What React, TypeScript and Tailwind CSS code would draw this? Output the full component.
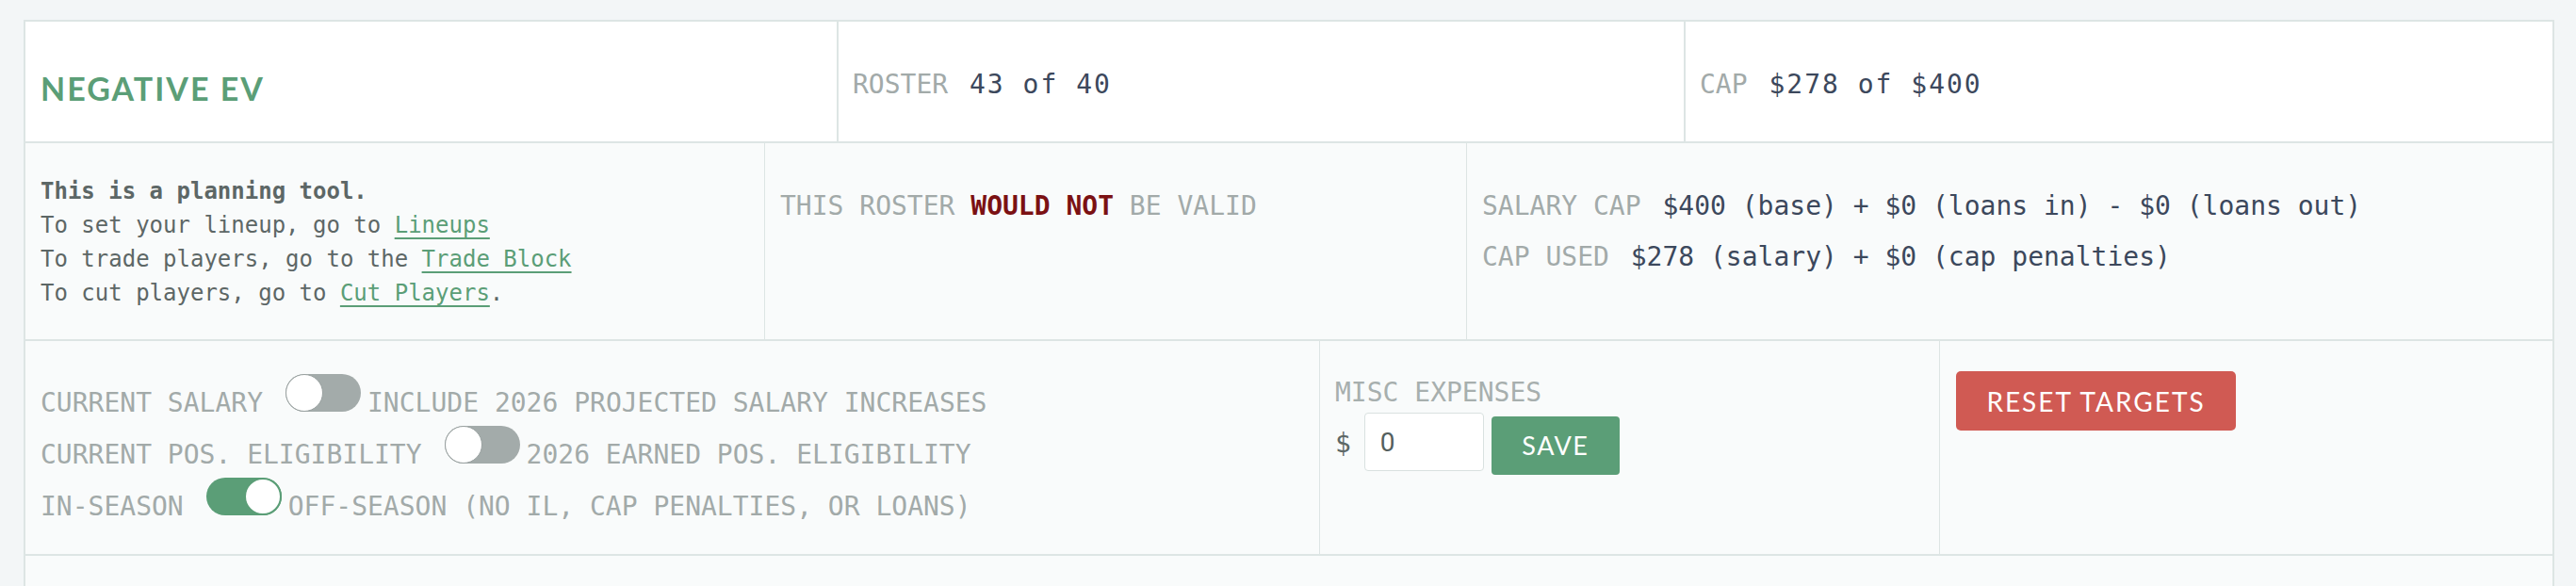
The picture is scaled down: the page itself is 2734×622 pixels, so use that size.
import React from "react";

function Toggle({ on }: { on: boolean }) {
  return (
    <div
      className={`relative ml-[24px] mr-[7px] h-[40px] w-[80px] shrink-0 rounded-full ${
        on ? "bg-[#5b9e77]" : "bg-[#a3abaa]"
      }`}
    >
      <div
        className={`absolute top-0 h-[40px] w-[40px] rounded-full bg-white ${
          on ? "right-0 border-2 border-[#5b9e77]" : "left-0 border-[1.5px] border-[#98a09f]"
        }`}
      />
    </div>
  );
}

function ToggleRow({ left, right, on }: { left: string; right: string; on: boolean }) {
  return (
    <div className="flex items-baseline">
      <span className="leading-none whitespace-pre">{left}</span>
      <Toggle on={on} />
      <span className="leading-none whitespace-pre">{right}</span>
    </div>
  );
}

export default function App() {
  return (
    <div className="h-screen overflow-hidden bg-[#f3f6f7] pt-[21px] pl-[25px] pr-[23px] font-['DejaVu_Sans_Mono',monospace]">
      <div className="border-2 border-b-0 border-[#dde5e4]">
        {/* Row 1 */}
        <div className="grid h-[129px] grid-cols-[861px_899px_1fr] border-b-2 border-[#dde5e4] bg-white">
          <div className="pl-4 pt-[54px]">
            <h1 className="font-['Lato',sans-serif] text-[34px] font-bold leading-none tracking-[2px] text-[#5b9e77]">
              NEGATIVE EV
            </h1>
          </div>
          <div className="border-l-2 border-[#dde5e4] pl-[15px] pt-[53px] text-[28px] leading-none">
            <span className="text-[#a2aaa9]">ROSTER</span>{" "}
            <span className="ml-[6px] tracking-[2px] text-[#3c485c]">43 of 40</span>
          </div>
          <div className="border-l-2 border-[#dde5e4] pl-[15px] pt-[53px] text-[28px] leading-none">
            <span className="text-[#a2aaa9]">CAP</span>{" "}
            <span className="ml-[6px] tracking-[2px] text-[#3c485c]">$278 of $400</span>
          </div>
        </div>

        {/* Row 2 */}
        <div className="grid h-[210px] grid-cols-[784px_745px_1fr] border-b-2 border-[#dde5e4] bg-[#f9fbfb]">
          <div className="pl-4 pt-[33px] text-[24px] leading-[36px] text-[#5d6766]">
            <div className="font-bold">This is a planning tool.</div>
            <div>
              To set your lineup, go to{" "}
              <a className="text-[#5b9e77] underline decoration-2 underline-offset-[5px]">Lineups</a>
            </div>
            <div>
              To trade players, go to the{" "}
              <a className="text-[#5b9e77] underline decoration-2 underline-offset-[5px]">Trade Block</a>
            </div>
            <div>
              To cut players, go to{" "}
              <a className="text-[#5b9e77] underline decoration-2 underline-offset-[5px]">Cut Players</a>.
            </div>
          </div>
          <div className="border-l border-[#dde5e4] pl-4 pt-[40px] text-[28px] leading-[54px] text-[#a2aaa9]">
            THIS ROSTER <span className="font-bold text-[#7b1113]">WOULD NOT</span> BE VALID
          </div>
          <div className="border-l border-[#dde5e4] pl-4 pt-[40px] text-[28px] leading-[54px]">
            <div>
              <span className="text-[#a2aaa9]">SALARY CAP</span>{" "}
              <span className="ml-[6px] text-[#3c485c]">$400 (base) + $0 (loans in) - $0 (loans out)</span>
            </div>
            <div>
              <span className="text-[#a2aaa9]">CAP USED</span>{" "}
              <span className="ml-[6px] text-[#3c485c]">$278 (salary) + $0 (cap penalties)</span>
            </div>
          </div>
        </div>

        {/* Row 3 */}
        <div className="grid h-[228px] grid-cols-[1373px_658px_1fr] border-b-2 border-[#dde5e4] bg-[#f9fbfb]">
          <div className="flex flex-col gap-[10px] pl-4 pt-[35px] text-[28px] text-[#a2aaa9]">
            <ToggleRow left="CURRENT SALARY" right="INCLUDE 2026 PROJECTED SALARY INCREASES" on={false} />
            <ToggleRow left="CURRENT POS. ELIGIBILITY" right="2026 EARNED POS. ELIGIBILITY" on={false} />
            <ToggleRow left="IN-SEASON" right="OFF-SEASON (NO IL, CAP PENALTIES, OR LOANS)" on={true} />
          </div>
          <div className="border-l border-[#dde5e4] pl-4 pt-[41px] text-[28px]">
            <div className="leading-none text-[#a7afae]">MISC EXPENSES</div>
            <div className="mt-[7px] flex items-start">
              <span className="mt-[19px] leading-none text-[#5d6766]">$</span>
              <input
                readOnly
                value="0"
                className="ml-[14px] h-[62px] w-[127px] rounded-[4px] border border-[#d9e1e0] bg-white pl-4 font-['Roboto',sans-serif] text-[28px] text-[#555f5e] outline-none"
              />
              <button className="ml-2 mt-[4px] h-[62px] w-[136px] rounded-[4px] bg-[#5b9e77] font-['Lato',sans-serif] text-[27px] tracking-[1.5px] text-white">
                SAVE
              </button>
            </div>
          </div>
          <div className="border-l border-[#dde5e4] pl-[17px] pt-[32px]">
            <button className="h-[63px] w-[297px] rounded-[5px] bg-[#d05a53] font-['Lato',sans-serif] text-[28px] tracking-[2px] text-white">
              RESET TARGETS
            </button>
          </div>
        </div>

        {/* Row 4 */}
        <div className="h-[60px] bg-[#f9fbfb]" />
      </div>
    </div>
  );
}
